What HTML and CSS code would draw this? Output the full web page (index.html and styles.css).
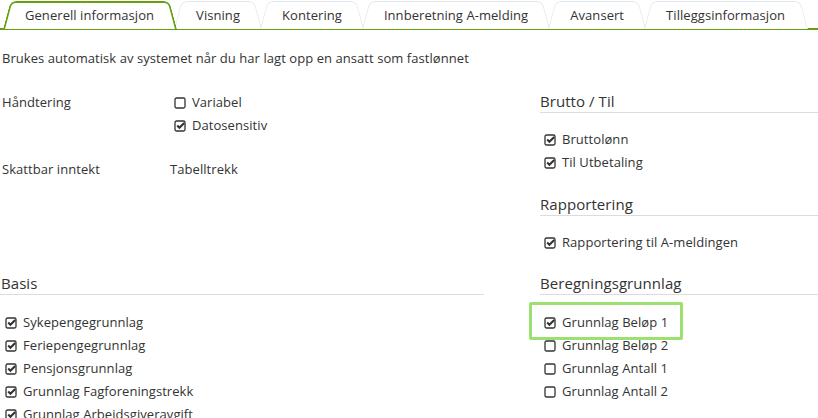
FILE: index.html
```html
<!DOCTYPE html>
<html lang="no">
<head>
<meta charset="utf-8">
<title>Lønnsart</title>
<link rel="stylesheet" href="styles.css">
</head>
<body>
<nav class="tabs">
  <div class="tab active">Generell informasjon</div>
  <div class="tab">Visning</div>
  <div class="tab">Kontering</div>
  <div class="tab">Innberetning A-melding</div>
  <div class="tab">Avansert</div>
  <div class="tab">Tilleggsinformasjon</div>
</nav>

<p class="desc">Brukes automatisk av systemet når du har lagt opp en ansatt som fastlønnet</p>

<main class="grid">
  <section class="col-left top">
    <div class="form-group">
      <div class="label">Håndtering</div>
      <div class="value">
        <div class="chk"><svg class="ico" viewBox="0 0 12 12"><rect x="1" y="1" width="10" height="10" rx="1.5"/></svg>Variabel</div>
        <div class="chk"><svg class="ico" viewBox="0 0 12 12"><rect x="1" y="1" width="10" height="10" rx="1.5"/><path class="tick" d="M3.2 5.6 L5.4 7.8 L10.2 3"/></svg>Datosensitiv</div>
      </div>
    </div>
    <div class="form-group second">
      <div class="label">Skattbar inntekt</div>
      <div class="value plain">Tabelltrekk</div>
    </div>
  </section>

  <section class="col-right top">
    <h3 class="heading">Brutto / Til</h3>
    <ul class="list">
      <li class="chk"><svg class="ico" viewBox="0 0 12 12"><rect x="1" y="1" width="10" height="10" rx="1.5"/><path class="tick" d="M3.2 5.6 L5.4 7.8 L10.2 3"/></svg>Bruttolønn</li>
      <li class="chk"><svg class="ico" viewBox="0 0 12 12"><rect x="1" y="1" width="10" height="10" rx="1.5"/><path class="tick" d="M3.2 5.6 L5.4 7.8 L10.2 3"/></svg>Til Utbetaling</li>
    </ul>
    <h3 class="heading">Rapportering</h3>
    <ul class="list">
      <li class="chk"><svg class="ico" viewBox="0 0 12 12"><rect x="1" y="1" width="10" height="10" rx="1.5"/><path class="tick" d="M3.2 5.6 L5.4 7.8 L10.2 3"/></svg>Rapportering til A-meldingen</li>
    </ul>
  </section>

  <section class="col-left">
    <h3 class="heading">Basis</h3>
    <ul class="list basis">
      <li class="chk"><svg class="ico" viewBox="0 0 12 12"><rect x="1" y="1" width="10" height="10" rx="1.5"/><path class="tick" d="M3.2 5.6 L5.4 7.8 L10.2 3"/></svg>Sykepengegrunnlag</li>
      <li class="chk"><svg class="ico" viewBox="0 0 12 12"><rect x="1" y="1" width="10" height="10" rx="1.5"/><path class="tick" d="M3.2 5.6 L5.4 7.8 L10.2 3"/></svg>Feriepengegrunnlag</li>
      <li class="chk"><svg class="ico" viewBox="0 0 12 12"><rect x="1" y="1" width="10" height="10" rx="1.5"/><path class="tick" d="M3.2 5.6 L5.4 7.8 L10.2 3"/></svg>Pensjonsgrunnlag</li>
      <li class="chk"><svg class="ico" viewBox="0 0 12 12"><rect x="1" y="1" width="10" height="10" rx="1.5"/><path class="tick" d="M3.2 5.6 L5.4 7.8 L10.2 3"/></svg>Grunnlag Fagforeningstrekk</li>
      <li class="chk"><svg class="ico" viewBox="0 0 12 12"><rect x="1" y="1" width="10" height="10" rx="1.5"/><path class="tick" d="M3.2 5.6 L5.4 7.8 L10.2 3"/></svg>Grunnlag Arbeidsgiveravgift</li>
    </ul>
  </section>

  <section class="col-right">
    <h3 class="heading">Beregningsgrunnlag</h3>
    <ul class="list basis">
      <li class="chk highlight"><svg class="ico" viewBox="0 0 12 12"><rect x="1" y="1" width="10" height="10" rx="1.5"/><path class="tick" d="M3.2 5.6 L5.4 7.8 L10.2 3"/></svg>Grunnlag Beløp 1</li>
      <li class="chk"><svg class="ico" viewBox="0 0 12 12"><rect x="1" y="1" width="10" height="10" rx="1.5"/></svg>Grunnlag Beløp 2</li>
      <li class="chk"><svg class="ico" viewBox="0 0 12 12"><rect x="1" y="1" width="10" height="10" rx="1.5"/></svg>Grunnlag Antall 1</li>
      <li class="chk"><svg class="ico" viewBox="0 0 12 12"><rect x="1" y="1" width="10" height="10" rx="1.5"/></svg>Grunnlag Antall 2</li>
    </ul>
  </section>
</main>
</body>
</html>
```

FILE: styles.css
```css
html, body {
  margin: 0;
  padding: 0;
  background: #fff;
}
body {
  width: 818px;
  height: 418px;
  overflow: hidden;
  font-family: "Open Sans", "Noto Sans", sans-serif;
  font-size: 13px;
  letter-spacing: 0.06px;
  color: #333;
}

/* Tabs */
.tabs {
  display: flex;
  padding: 1px 0 0 3px;
  border-bottom: 2px solid #66a00f;
  height: 27px;
}
.tab {
  position: relative;
  z-index: 1;
  padding: 1px 22px 0;
  line-height: 26px;
  height: 27px;
  margin-right: -2px;
  color: #333;
  white-space: nowrap;
}
.tab::before,
.tab::after {
  content: "";
  position: absolute;
  top: 0;
  bottom: 0;
  z-index: -1;
  background: #fff;
  border: 1px solid #dfe8ef;
  border-bottom: none;
  transform-origin: bottom;
}
.tab::before {
  left: 0;
  right: 50%;
  border-right: none;
  border-top-left-radius: 6px;
  transform: skewX(-15deg);
}
.tab::after {
  left: 50%;
  right: 0;
  border-left: none;
  border-top-right-radius: 6px;
  transform: skewX(15deg);
}
.tab.active {
  z-index: 3;
}
.tab.active::before,
.tab.active::after {
  border-color: #66a00f;
  border-width: 2px;
  border-bottom: none;
}
.tab.active::before { border-right: none; }
.tab.active::after { border-left: none; }

/* Description */
.desc {
  margin: 19px 0 0;
  padding-left: 2px;
  line-height: 18px;
}

/* Grid */
.grid {
  display: grid;
  grid-template-columns: 484px 1fr;
  column-gap: 56px;
  margin-top: 24px;
}
.top {
  padding-bottom: 19px;
}

.form-group {
  display: flex;
}
.form-group.second {
  margin-top: 21px;
}
.label {
  width: 168px;
  padding-left: 2px;
  line-height: 23px;
}
.value .chk {
  padding-left: 4px;
}
.value.plain {
  line-height: 23px;
}

.heading {
  margin: 0;
  font-size: 15px;
  font-weight: normal;
  line-height: 20px;
  padding: 0 0 1px 0;
  border-bottom: 1px solid #dcdcdc;
  color: #333;
}
.col-left .heading {
  padding-left: 1px;
}

.list {
  list-style: none;
  margin: 15px 0 20px;
  padding: 0 0 0 4px;
}
.list:last-child {
  margin-bottom: 0;
}
.list.basis {
  margin-top: 16px;
}
.col-left .list {
  padding-left: 5px;
}

.chk {
  display: flex;
  align-items: center;
  height: 23px;
  line-height: 23px;
  white-space: nowrap;
}
.ico {
  width: 12px;
  height: 12px;
  margin-right: 6px;
  flex: none;
  fill: none;
  stroke: #333;
  stroke-width: 1.3;
}
.ico .tick {
  stroke-width: 2.1;
  stroke-linecap: butt;
  stroke-linejoin: miter;
}

.highlight {
  position: relative;
}
.highlight::after {
  content: "";
  position: absolute;
  left: -15px;
  top: -9px;
  width: 148px;
  height: 32px;
  border: 3px solid #9be070;
  border-radius: 2px;
}
```
